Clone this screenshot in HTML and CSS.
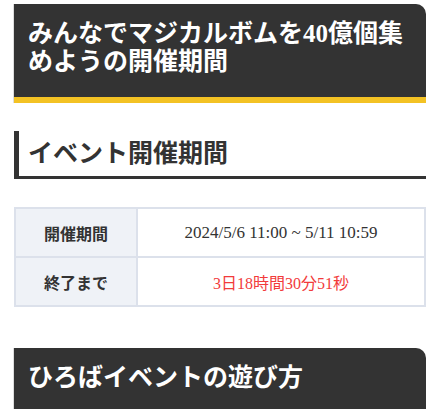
FILE: index.html
```html
<!DOCTYPE html>
<html lang="ja">
  <head>
    <meta charset="UTF-8" />
    <title>みんなでマジカルボムを40億個集めようの開催期間</title>
    <link rel="stylesheet" href="styles.css">
  </head>
  <body>
    <div class="page">
      <!-- ページタイトル -->
      <h1 class="page-title">みんなでマジカルボムを40億個集めようの開催期間</h1>

      <!-- 開催期間 -->
      <h2 class="section-title">イベント開催期間</h2>
      <table class="period-table">
        <tr>
          <th>開催期間</th>
          <td class="date">2024/5/6 11:00 ~ 5/11 10:59</td>
        </tr>
        <tr>
          <th>終了まで</th>
          <td class="countdown">3日18時間30分51秒</td>
        </tr>
      </table>

      <!-- 遊び方 -->
      <h1 class="page-title plain">ひろばイベントの遊び方</h1>
    </div>
  </body>
</html>
```

FILE: styles.css
```css
body {
  margin: 0;
  padding: 0;
  background: #fff;
  color: #333;
  font-family: "Liberation Serif", "Noto Sans CJK JP", serif;
}

.page {
  padding: 4px 14px 0;
}

/* 黒い見出し + 黄色の下線 */
.page-title {
  margin: 0;
  padding: 16px 14px 21px;
  background: #333;
  color: #fff;
  font-size: 25px;
  line-height: 28px;
  font-weight: bold;
  border-radius: 0 10px 0 0;
  border-bottom: 6px solid #f3c224;
  box-shadow: -1px 0 0 #ddd;
}
.page-title.plain {
  margin-top: 41px;
  border-bottom: none;
}

/* 左線 + 下線の見出し */
.section-title {
  margin: 28px 0 0;
  padding: 8px 0 8px 9px;
  font-size: 25px;
  line-height: 29px;
  font-weight: bold;
  color: #333;
  border-left: 5px solid #333;
  border-bottom: 3px solid #333;
}

/* 期間テーブル */
.period-table {
  width: 100%;
  margin-top: 28px;
  border-collapse: collapse;
  font-size: 16px;
}
.period-table th,
.period-table td {
  height: 47px;
  padding: 0 8px;
  border: 2px solid #dce1eb;
  text-align: center;
}
.period-table th {
  width: 104px;
  background: #eff2f7;
  font-weight: bold;
  color: #333;
}
.period-table td {
  color: #333;
}
.period-table td.date {
  font-size: 17px;
}
.period-table td.countdown {
  color: #f23b3b;
}
```
